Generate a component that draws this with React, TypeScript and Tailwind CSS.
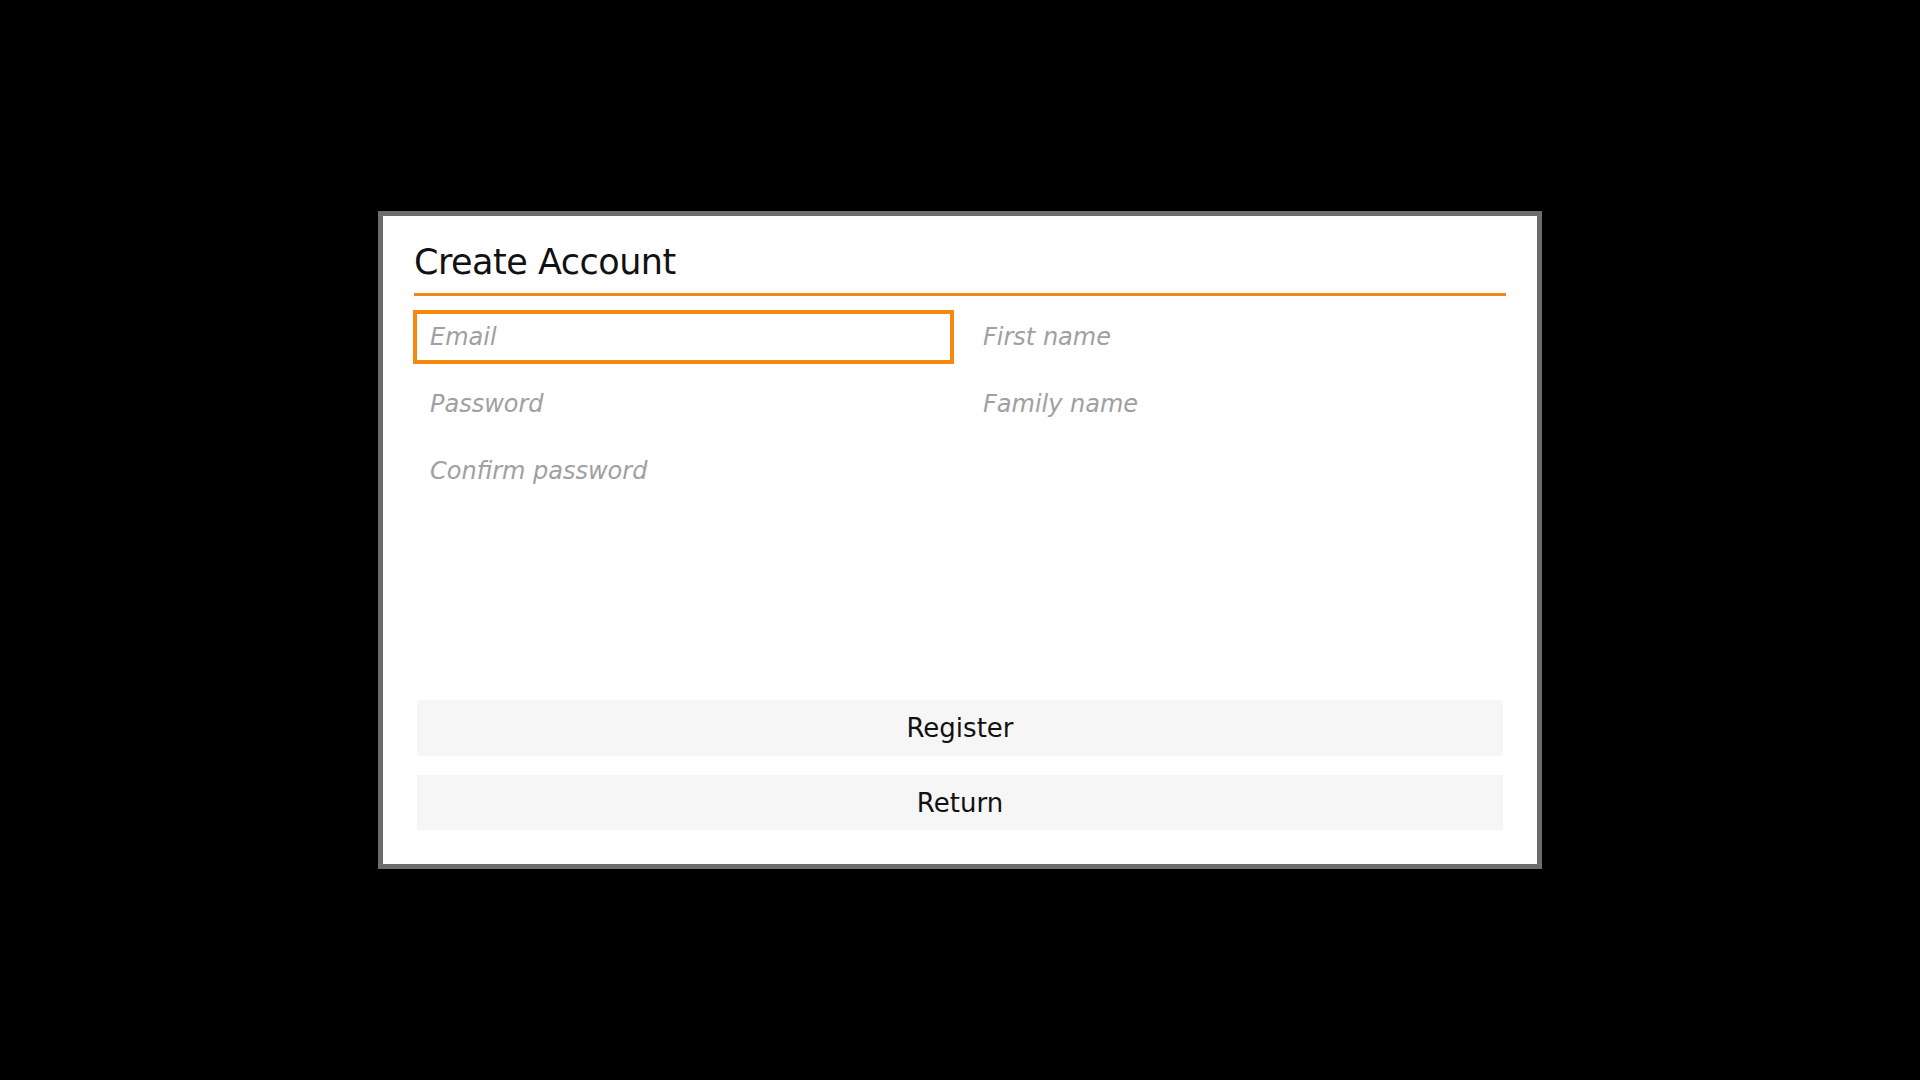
import React from 'react'

const fields = [
  { name: 'email', placeholder: 'Email', active: true },
  { name: 'firstName', placeholder: 'First name' },
  { name: 'password', placeholder: 'Password' },
  { name: 'familyName', placeholder: 'Family name' },
  { name: 'confirm', placeholder: 'Confirm password' },
]

const Field: React.FC<{ placeholder: string; active?: boolean }> = ({ placeholder, active }) => (
  <input
    type="text"
    placeholder={placeholder}
    className={`h-[54px] w-full border-4 border-solid px-[13px] bg-white outline-none text-[24px] text-[#111] placeholder:italic placeholder:text-[#a0a0a0] ${
      active ? 'border-[#f5890e]' : 'border-transparent'
    }`}
  />
)

export default function App() {
  return (
    <div
      className="min-h-screen w-full bg-black flex items-center justify-center"
      style={{ fontFamily: '"DejaVu Sans", Verdana, sans-serif' }}
    >
      <div className="w-[1164px] h-[658px] bg-white border-[5px] border-solid border-[#6c6c6c] flex flex-col px-[30px] pt-[29px] pb-[34px]">
        <h1 className="text-[35px] leading-none tracking-[-0.5px] text-[#111] font-normal pl-[1px]">Create Account</h1>
        <div className="h-[3px] bg-[#f0890f] mt-[13px] mx-[1px]" />
        <div className="grid grid-cols-2 gap-x-[12px] gap-y-[13px] mt-[14px]">
          {fields.map((f) => (
            <Field key={f.name} placeholder={f.placeholder} active={f.active} />
          ))}
        </div>
        <div className="flex-1" />
        <div className="flex flex-col gap-[19px] mx-[4px]">
          <button className="h-[56px] bg-[#f6f6f6] text-[26px] text-[#111]">Register</button>
          <button className="h-[55px] bg-[#f6f6f6] text-[26px] text-[#111] pt-[2px]">Return</button>
        </div>
      </div>
    </div>
  )
}
